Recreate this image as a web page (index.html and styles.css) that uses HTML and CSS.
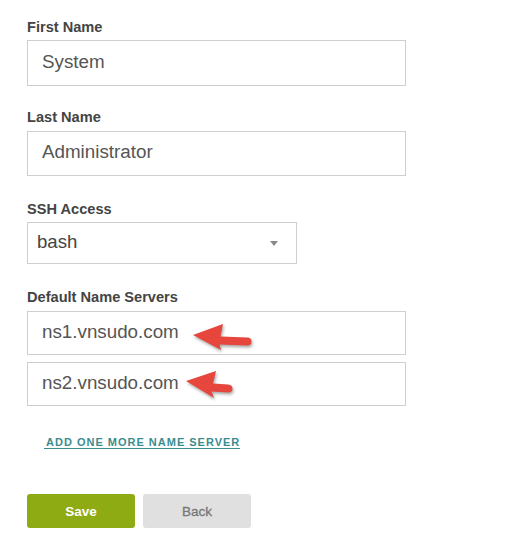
FILE: index.html
```html
<!DOCTYPE html>
<html lang="en">
<head>
<meta charset="utf-8">
<title>Account settings</title>
<link rel="stylesheet" href="styles.css">
</head>
<body>
<form class="form">
  <div class="field f1">
    <label class="label">First Name</label>
    <div class="box h46">System</div>
  </div>
  <div class="field f2">
    <label class="label">Last Name</label>
    <div class="box h45">Administrator</div>
  </div>
  <div class="field f3">
    <label class="label">SSH Access</label>
    <div class="select">bash<span class="caret"></span></div>
  </div>
  <div class="field f3 f4">
    <label class="label">Default Name Servers</label>
    <div class="stack">
      <div class="box h44 annotated">ns1.vnsudo.com
        <svg class="arrow a1" width="66" height="36" viewBox="0 0 66 36"><path d="M4 16 L34 5 L31.5 17.5 L58 18.5 Q62.5 18.7 62.5 22.5 Q62.5 26.5 58 26.5 L30.5 25.5 L32 31 Z"/></svg>
      </div>
      <div class="box h44 annotated">ns2.vnsudo.com
        <svg class="arrow a2" width="56" height="36" viewBox="0 0 56 36"><path d="M4 14 L34 4 L31 16.5 L46 17.5 Q50.5 18 50.5 21.5 Q50.5 25.5 46 25.5 L29.5 24.5 L32 31 Z"/></svg>
      </div>
    </div>
  </div>
  <a class="addlink" href="#">ADD ONE MORE NAME SERVER</a>
  <div class="actions">
    <button type="button" class="btn save">Save</button>
    <button type="button" class="btn back">Back</button>
  </div>
</form>
</body>
</html>
```
FILE: styles.css
```css
html, body {
  margin: 0;
  padding: 0;
  background: #ffffff;
}
body {
  font-family: "Liberation Sans", Arial, sans-serif;
}
.form {
  display: flex;
  flex-direction: column;
  align-items: flex-start;
  padding: 19px 0 0 27px;
}
.field {
  display: flex;
  flex-direction: column;
}
.f2 { margin-top: 23px; }
.f3 { margin-top: 25px; }
.label {
  display: block;
  font-weight: 700;
  font-size: 14.6px;
  line-height: 16px;
  color: #444444;
  margin-bottom: 5px;
}
.f2 .label { margin-bottom: 6px; }
.f4 .label { margin-bottom: 6px; }
.box {
  box-sizing: border-box;
  width: 379px;
  border: 1px solid #cfcfcf;
  background: #fff;
  display: flex;
  align-items: center;
  padding: 0 0 3px 14px;
  font-size: 18.8px;
  color: #555555;
}
.h46 { height: 46px; }
.h45 { height: 45px; }
.h44 { height: 44px; }
.stack {
  display: flex;
  flex-direction: column;
  gap: 7px;
}
.annotated { position: relative; }
.select {
  box-sizing: border-box;
  width: 270px;
  height: 42px;
  border: 1px solid #cfcfcf;
  display: flex;
  align-items: center;
  justify-content: space-between;
  padding: 0 18px 2px 9px;
  font-size: 18.6px;
  color: #444444;
}
.caret {
  width: 0;
  height: 0;
  border-left: 4px solid transparent;
  border-right: 4px solid transparent;
  border-top: 5px solid #8a8a8a;
  margin-top: 3px;
}
.arrow {
  position: absolute;
  fill: #e6463c;
  filter: drop-shadow(1px 2px 1.5px rgba(0,0,0,0.35));
}
.a1 { left: 161px; top: 7px; }
.a2 { left: 154px; top: 4px; }
.addlink {
  margin: 30px 0 0 17px;
  padding-left: 2px;
  font-size: 11px;
  line-height: 12px;
  font-weight: 700;
  letter-spacing: 1px;
  color: #3a8d8e;
  text-decoration: none;
  border-bottom: 1px solid #3a8d8e;
}
.actions {
  display: flex;
  gap: 8px;
  margin-top: 45px;
}
.btn {
  width: 108px;
  height: 34px;
  border: none;
  border-radius: 3px;
  font-family: "Liberation Sans", Arial, sans-serif;
  font-weight: 700;
  font-size: 13.5px;
  padding: 0;
}
.save {
  background: #8fab14;
  color: #ffffff;
}
.back {
  background: #e0e0e0;
  color: #777777;
  font-weight: 400;
  -webkit-text-stroke: 0.3px #777777;
}
```
